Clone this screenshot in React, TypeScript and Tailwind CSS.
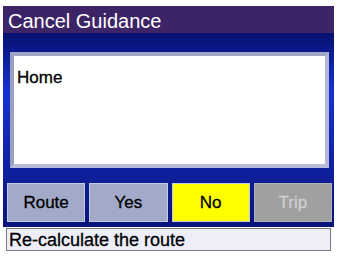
import React from "react";

export default function App() {
  const font = { fontFamily: '"Liberation Sans", Arial, sans-serif' };
  return (
    <div className="w-[340px] h-[256px] bg-white pt-[6px] overflow-hidden" style={font}>
      <div className="ml-[3px] w-[331px] flex flex-col">
        <div className="h-[27px] bg-[#3c2466] flex items-center pl-[5px] pt-[3px] text-white text-[20px] leading-none">
          Cancel Guidance
        </div>
        <div className="h-[194px] bg-gradient-to-b from-[#061070] via-[#1632d4] via-30% to-[#0a1478] flex flex-col pt-[19px] pb-[5px]">
          <div className="ml-[7px] mr-[5px] h-[116px] border-[4px] border-t-[#a0a6c4] border-l-[#9aa0c0] border-r-[#b4b8d4] border-b-[#b8bcd8] bg-white pl-[3px] pt-[13px] text-[17px] leading-none text-black [-webkit-text-stroke:0.3px_black]">
            Home
          </div>
          <div className="mt-[15px] ml-[4px] mr-[2px] grid grid-cols-4 gap-[4px] h-[39px]">
            <div className="bg-[#a2a9c9] border border-[#c4cae2] flex items-center justify-center text-[17px] text-black [-webkit-text-stroke:0.3px_black]">Route</div>
            <div className="bg-[#a2a9c9] border border-[#c4cae2] flex items-center justify-center text-[17px] text-black [-webkit-text-stroke:0.3px_black]">Yes</div>
            <div className="bg-[#ffff00] border border-[#c4cae2] flex items-center justify-center text-[17px] text-black [-webkit-text-stroke:0.3px_black]">No</div>
            <div className="bg-[#a0a0a0] border border-[#b0b0b8] flex items-center justify-center text-[17px] text-[#cfcfcf] [-webkit-text-stroke:0.3px_#cfcfcf]">Trip</div>
          </div>
        </div>
      </div>
      <div className="mt-[1px] ml-[6px] w-[325px] h-[23px] border border-[#7a7a86] bg-[#eeeef8] flex items-center pl-[2px] text-[18px] text-black leading-none [-webkit-text-stroke:0.3px_black]">
        Re-calculate the route
      </div>
    </div>
  );
}
